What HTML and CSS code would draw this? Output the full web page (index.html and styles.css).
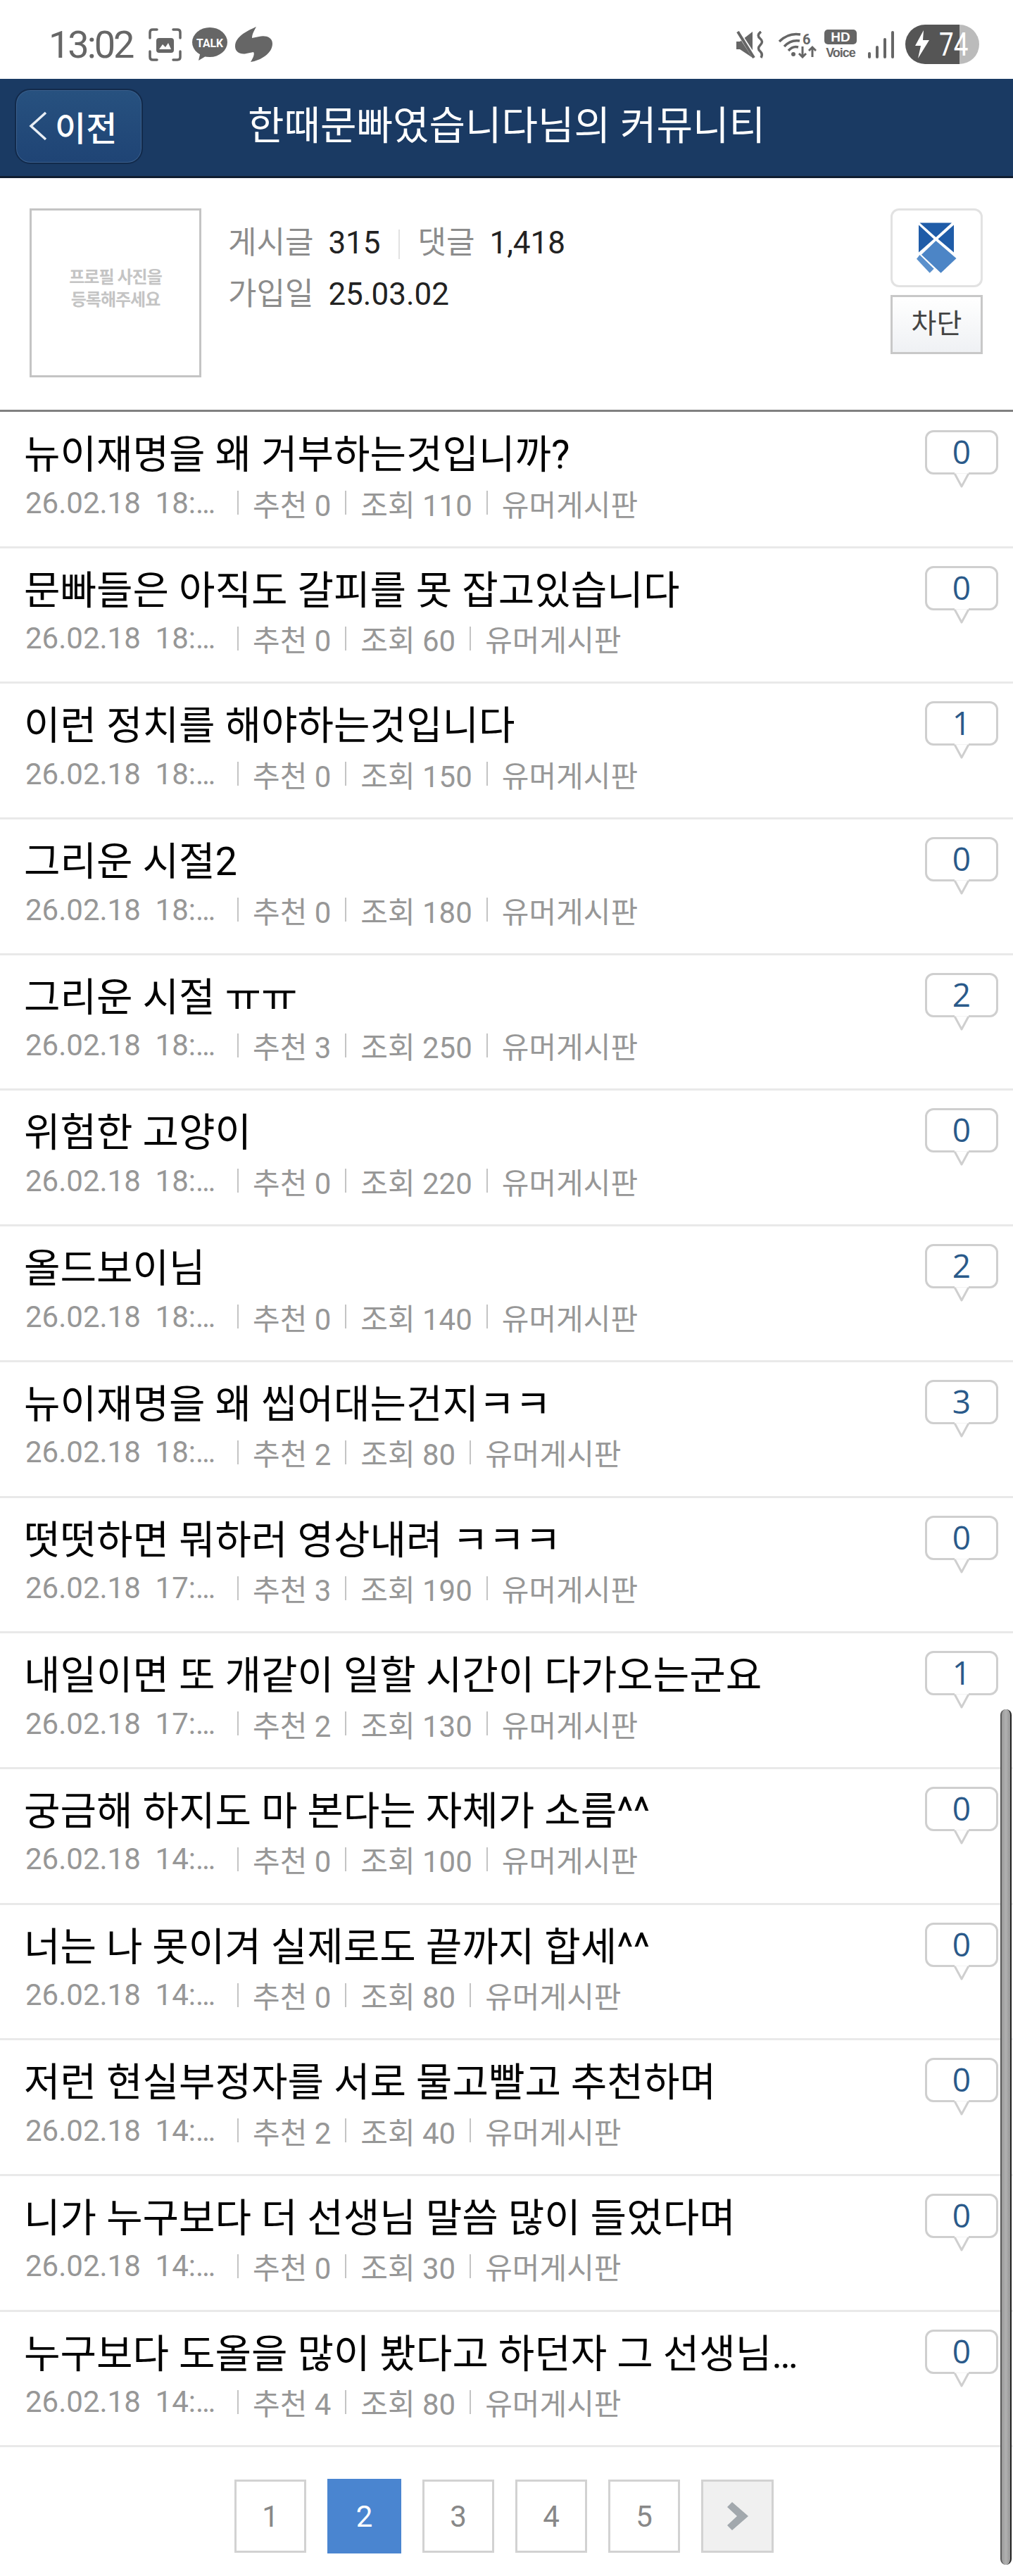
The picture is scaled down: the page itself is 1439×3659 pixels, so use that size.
FILE: index.html
```html
<!DOCTYPE html>
<html lang="ko">
<head>
  <meta charset="UTF-8">
  <meta name="viewport" content="width=device-width, initial-scale=1.0">
  <title>한때문빠였습니다님의 커뮤니티</title>
  <link rel="stylesheet" href="styles.css">
</head>
<body>
  <svg class="defs" width="0" height="0">
    <symbol id="tail" viewBox="0 0 30 24">
      <path d="M0 1.5H5L15 20L25 1.5H30" fill="#fff" stroke="#cfcfcf" stroke-width="3" stroke-linejoin="round"/>
      <rect x="5" y="0" width="20" height="1.5" fill="#fff"/>
    </symbol>
  </svg>

  <div class="status-bar">
    <div class="status-left">
      <span class="clock">13:02</span>
      <svg class="ico-shot" width="47" height="47" viewBox="0 0 47 47" fill="none" stroke="#666" stroke-width="3.5" stroke-linecap="round">
        <path d="M2 14V6Q2 2 6 2H12M35 2H41Q45 2 45 6V14M45 33V41Q45 45 41 45H35M12 45H6Q2 45 2 41V33"/>
        <rect x="11" y="14" width="25" height="21" rx="4" fill="#666" stroke="none"/>
        <path d="M15 30L20 23L24 27L28 21L32 30Z" fill="#fff" stroke="none"/>
      </svg>
      <svg class="ico-talk" width="50" height="48" viewBox="0 0 50 48">
        <ellipse cx="25" cy="21" rx="25" ry="21" fill="#666"/>
        <path d="M12 34L9 47L24 38Z" fill="#666"/>
        <text x="25" y="28" text-anchor="middle" class="talk-text" textLength="38" lengthAdjust="spacingAndGlyphs">TALK</text>
      </svg>
      <svg class="ico-flame" width="53" height="50" viewBox="0 0 53 50">
        <path d="M30 0C22 4 0 12 0 28C0 36 8 40 16 38L26 36C28 38 26 44 22 50C36 48 53 38 53 24C53 14 42 12 34 14L24 16C24 10 28 4 30 0Z" fill="#666"/>
      </svg>
    </div>
    <div class="status-right">
      <svg class="ico-mute" width="40" height="39" viewBox="0 0 40 39" fill="#666">
        <path d="M0 15H5L23 1V38L5 26H0Z"/>
        <path d="M1 -1L27 39" stroke="#fff" stroke-width="6"/>
        <path d="M2 1L25 38" stroke="#666" stroke-width="4"/>
        <path d="M35 1Q28 6 34 11Q39 15 34 20Q29 25 34 29Q38 33 35 38" fill="none" stroke="#666" stroke-width="3.5"/>
      </svg>
      <svg class="ico-wifi" width="54" height="39" viewBox="0 0 54 39" fill="none" stroke="#666" stroke-width="3.5">
        <path d="M1 15Q14 2 31 5M8 22Q17 12 30 14M14 28Q20 21 28 23"/>
        <circle cx="21" cy="33" r="3" fill="#666" stroke="none"/>
        <text x="34" y="19" class="wifi-six">6</text>
        <path d="M34 22V37M29 32L34 37L39 32M48 37V24M43 28L48 23L53 28" stroke-width="3"/>
      </svg>
      <div class="hd-voice">
        <span class="hd">HD</span>
        <span class="voice">Voice</span>
      </div>
      <div class="signal">
        <i class="bar-1"></i><i class="bar-2"></i><i class="bar-3"></i><i class="bar-4"></i>
      </div>
      <div class="battery">
        <svg width="20" height="40" viewBox="0 0 20 40"><path d="M12 0L0 22H8L4 40L20 14H11Z" fill="#fff"/></svg>
        <span class="battery-num">74</span>
      </div>
    </div>
  </div>

  <header class="topbar">
    <a class="back-btn">
      <svg width="26" height="42" viewBox="0 0 26 42" fill="none"><path d="M24 2L3 21L24 40" stroke="#e8eef5" stroke-width="3.5"/></svg>
      <span>이전</span>
    </a>
    <h1>한때문빠였습니다님의 커뮤니티</h1>
    <span></span>
  </header>

  <section class="profile">
    <div class="photo">프로필 사진을<br>등록해주세요</div>
    <div class="info">
      <p><span class="label">게시글</span> <b>315</b><i class="v-line"></i><span class="label">댓글</span> <b>1,418</b></p>
      <p><span class="label">가입일</span> <b>25.03.02</b></p>
    </div>
    <div class="actions">
      <div class="logo-box">
        <svg width="57" height="72" viewBox="0 0 57 72">
          <path d="M4.5 .5H50L27.5 21Z" fill="#1f5ca8"/>
          <path d="M3 3.5L24.5 23.5L3 42.5Z" fill="#1f5ca8"/>
          <path d="M53 3.5L30.5 23.5L53 42.5Z" fill="#1f5ca8"/>
          <path d="M27.5 26L56.5 51L34.5 71.7L7 45.7Z" fill="#4c85c6"/>
          <path d="M4.5 46L24.7 65.7L18.7 71.7L0 51.7Z" fill="#5a90cc"/>
        </svg>
      </div>
      <div class="block-btn">차단</div>
    </div>
  </section>

  <ul class="post-list">
    <li class="post">
      <div class="post-main">
        <div class="post-title">뉴이재명을 왜 거부하는것입니까?</div>
        <div class="post-meta"><span class="date">26.02.18&nbsp;&nbsp;18:…</span><i></i><span>추천 0</span><i></i><span>조회 110</span><i></i><span>유머게시판</span></div>
      </div>
      <div class="bubble"><div class="count">0</div><svg class="tail"><use href="#tail"/></svg></div>
    </li>
    <li class="post">
      <div class="post-main">
        <div class="post-title">문빠들은 아직도 갈피를 못 잡고있습니다</div>
        <div class="post-meta"><span class="date">26.02.18&nbsp;&nbsp;18:…</span><i></i><span>추천 0</span><i></i><span>조회 60</span><i></i><span>유머게시판</span></div>
      </div>
      <div class="bubble"><div class="count">0</div><svg class="tail"><use href="#tail"/></svg></div>
    </li>
    <li class="post">
      <div class="post-main">
        <div class="post-title">이런 정치를 해야하는것입니다</div>
        <div class="post-meta"><span class="date">26.02.18&nbsp;&nbsp;18:…</span><i></i><span>추천 0</span><i></i><span>조회 150</span><i></i><span>유머게시판</span></div>
      </div>
      <div class="bubble"><div class="count">1</div><svg class="tail"><use href="#tail"/></svg></div>
    </li>
    <li class="post">
      <div class="post-main">
        <div class="post-title">그리운 시절2</div>
        <div class="post-meta"><span class="date">26.02.18&nbsp;&nbsp;18:…</span><i></i><span>추천 0</span><i></i><span>조회 180</span><i></i><span>유머게시판</span></div>
      </div>
      <div class="bubble"><div class="count">0</div><svg class="tail"><use href="#tail"/></svg></div>
    </li>
    <li class="post">
      <div class="post-main">
        <div class="post-title">그리운 시절 ㅠㅠ</div>
        <div class="post-meta"><span class="date">26.02.18&nbsp;&nbsp;18:…</span><i></i><span>추천 3</span><i></i><span>조회 250</span><i></i><span>유머게시판</span></div>
      </div>
      <div class="bubble"><div class="count">2</div><svg class="tail"><use href="#tail"/></svg></div>
    </li>
    <li class="post">
      <div class="post-main">
        <div class="post-title">위험한 고양이</div>
        <div class="post-meta"><span class="date">26.02.18&nbsp;&nbsp;18:…</span><i></i><span>추천 0</span><i></i><span>조회 220</span><i></i><span>유머게시판</span></div>
      </div>
      <div class="bubble"><div class="count">0</div><svg class="tail"><use href="#tail"/></svg></div>
    </li>
    <li class="post">
      <div class="post-main">
        <div class="post-title">올드보이님</div>
        <div class="post-meta"><span class="date">26.02.18&nbsp;&nbsp;18:…</span><i></i><span>추천 0</span><i></i><span>조회 140</span><i></i><span>유머게시판</span></div>
      </div>
      <div class="bubble"><div class="count">2</div><svg class="tail"><use href="#tail"/></svg></div>
    </li>
    <li class="post">
      <div class="post-main">
        <div class="post-title">뉴이재명을 왜 씹어대는건지ㅋㅋ</div>
        <div class="post-meta"><span class="date">26.02.18&nbsp;&nbsp;18:…</span><i></i><span>추천 2</span><i></i><span>조회 80</span><i></i><span>유머게시판</span></div>
      </div>
      <div class="bubble"><div class="count">3</div><svg class="tail"><use href="#tail"/></svg></div>
    </li>
    <li class="post">
      <div class="post-main">
        <div class="post-title">떳떳하면 뭐하러 영상내려 ㅋㅋㅋ</div>
        <div class="post-meta"><span class="date">26.02.18&nbsp;&nbsp;17:…</span><i></i><span>추천 3</span><i></i><span>조회 190</span><i></i><span>유머게시판</span></div>
      </div>
      <div class="bubble"><div class="count">0</div><svg class="tail"><use href="#tail"/></svg></div>
    </li>
    <li class="post">
      <div class="post-main">
        <div class="post-title">내일이면 또 개같이 일할 시간이 다가오는군요</div>
        <div class="post-meta"><span class="date">26.02.18&nbsp;&nbsp;17:…</span><i></i><span>추천 2</span><i></i><span>조회 130</span><i></i><span>유머게시판</span></div>
      </div>
      <div class="bubble"><div class="count">1</div><svg class="tail"><use href="#tail"/></svg></div>
    </li>
    <li class="post">
      <div class="post-main">
        <div class="post-title">궁금해 하지도 마 본다는 자체가 소름^^</div>
        <div class="post-meta"><span class="date">26.02.18&nbsp;&nbsp;14:…</span><i></i><span>추천 0</span><i></i><span>조회 100</span><i></i><span>유머게시판</span></div>
      </div>
      <div class="bubble"><div class="count">0</div><svg class="tail"><use href="#tail"/></svg></div>
    </li>
    <li class="post">
      <div class="post-main">
        <div class="post-title">너는 나 못이겨 실제로도 끝까지 합세^^</div>
        <div class="post-meta"><span class="date">26.02.18&nbsp;&nbsp;14:…</span><i></i><span>추천 0</span><i></i><span>조회 80</span><i></i><span>유머게시판</span></div>
      </div>
      <div class="bubble"><div class="count">0</div><svg class="tail"><use href="#tail"/></svg></div>
    </li>
    <li class="post">
      <div class="post-main">
        <div class="post-title">저런 현실부정자를 서로 물고빨고 추천하며</div>
        <div class="post-meta"><span class="date">26.02.18&nbsp;&nbsp;14:…</span><i></i><span>추천 2</span><i></i><span>조회 40</span><i></i><span>유머게시판</span></div>
      </div>
      <div class="bubble"><div class="count">0</div><svg class="tail"><use href="#tail"/></svg></div>
    </li>
    <li class="post">
      <div class="post-main">
        <div class="post-title">니가 누구보다 더 선생님 말씀 많이 들었다며</div>
        <div class="post-meta"><span class="date">26.02.18&nbsp;&nbsp;14:…</span><i></i><span>추천 0</span><i></i><span>조회 30</span><i></i><span>유머게시판</span></div>
      </div>
      <div class="bubble"><div class="count">0</div><svg class="tail"><use href="#tail"/></svg></div>
    </li>
    <li class="post">
      <div class="post-main">
        <div class="post-title">누구보다 도올을 많이 봤다고 하던자 그 선생님…</div>
        <div class="post-meta"><span class="date">26.02.18&nbsp;&nbsp;14:…</span><i></i><span>추천 4</span><i></i><span>조회 80</span><i></i><span>유머게시판</span></div>
      </div>
      <div class="bubble"><div class="count">0</div><svg class="tail"><use href="#tail"/></svg></div>
    </li>
  </ul>

  <nav class="pager">
    <a>1</a>
    <a class="on">2</a>
    <a>3</a>
    <a>4</a>
    <a>5</a>
    <a class="next">
      <svg width="30" height="40" viewBox="0 0 30 40"><path d="M7 0L30 20L7 40L0 33L14 20L0 7Z" fill="#a2a8ad"/></svg>
    </a>
  </nav>

  <div class="scroll-thumb"></div>
</body>
</html>
```

FILE: styles.css
```css
* {
  box-sizing: border-box;
}

html, body {
  margin: 0;
  padding: 0;
}

body {
  position: relative;
  width: 1439px;
  height: 3659px;
  overflow: hidden;
  background: #fff;
  font-family: Roboto, "Noto Sans CJK KR", sans-serif;
  color: #000;
}

.defs {
  position: absolute;
}

/* status bar */
.status-bar {
  display: flex;
  justify-content: space-between;
  align-items: center;
  height: 112px;
  padding: 14px 48px 0 69px;
}

.status-left,
.status-right {
  display: flex;
  align-items: center;
}

.clock {
  font-size: 54px;
  letter-spacing: -3px;
  color: #666;
  margin-right: 23px;
}

.ico-talk {
  margin-left: 15px;
}

.ico-flame {
  margin-left: 11px;
}

.talk-text {
  font-size: 17px;
  font-weight: 700;
  fill: #fff;
}

.wifi-six {
  font-size: 20px;
  font-weight: 700;
  fill: #666;
  stroke: none;
}

.ico-wifi {
  margin-left: 20px;
}

.hd-voice {
  display: flex;
  flex-direction: column;
  align-items: center;
  width: 46px;
  margin-left: 11px;
}

.hd {
  width: 46px;
  height: 21px;
  border-radius: 5px;
  background: #666;
  color: #fff;
  font: 700 19px/21px "Liberation Sans", sans-serif;
  text-align: center;
}

.voice {
  margin-top: 3px;
  font: 700 18px/18px "Liberation Sans", sans-serif;
  letter-spacing: -1px;
  color: #666;
  white-space: nowrap;
}

.signal {
  display: flex;
  align-items: flex-end;
  gap: 7px;
  height: 39px;
  margin-left: 16px;
}

.signal i {
  display: block;
  width: 4px;
  border-radius: 2px;
  background: #666;
}

.bar-1 { height: 9px; }
.bar-2 { height: 18px; }
.bar-3 { height: 29px; }
.bar-4 { height: 39px; }

.battery {
  display: flex;
  align-items: center;
  width: 105px;
  height: 56px;
  margin-left: 16px;
  padding-left: 14px;
  border-radius: 28px;
  background: linear-gradient(90deg, #555 0, #555 77px, #bbb 77px);
}

.battery-num {
  display: block;
  margin-left: 14px;
  font-size: 46px;
  line-height: 56px;
  color: #fff;
  transform: scaleX(.8);
  transform-origin: left center;
}

/* navy top bar */
.topbar {
  display: grid;
  grid-template-columns: 1fr auto 1fr;
  align-items: center;
  height: 141px;
  padding: 0 21px 4px;
  background: #1a3a63;
  border-bottom: 3px solid #101d30;
  color: #fff;
}

.topbar h1 {
  margin: 0;
  font-size: 56px;
  font-weight: 400;
  line-height: 64px;
}

.back-btn {
  display: flex;
  align-items: center;
  gap: 11px;
  width: 182px;
  height: 107px;
  padding-left: 18px;
  border: 2px solid #122a4b;
  border-radius: 22px;
  background: linear-gradient(#27517f, #1f4475);
  box-shadow: inset 0 0 0 1px #3a5f8c;
  font-size: 48px;
  font-weight: 500;
}

/* profile box */
.profile {
  display: flex;
  height: 332px;
  padding: 43px 43px 0 42px;
  border-bottom: 3px solid #808080;
}

.photo {
  display: flex;
  align-items: center;
  justify-content: center;
  width: 244px;
  height: 240px;
  padding-bottom: 12px;
  border: 3px solid #c4c4c4;
  color: #c4c4c4;
  font-size: 24px;
  font-weight: 700;
  line-height: 32px;
  letter-spacing: -1px;
  text-align: center;
}

.info {
  flex: 1;
  margin-left: 38px;
  padding-top: 13px;
  font-size: 44px;
  line-height: 73px;
}

.info p {
  margin: 0;
  white-space: nowrap;
}

.info b {
  font-weight: 400;
  color: #222;
  margin-left: 10px;
}

.label {
  color: #8c8c8c;
}

.v-line {
  display: inline-block;
  width: 2px;
  height: 42px;
  margin: 0 26px 0 25px;
  background: #e2e2e2;
  vertical-align: -8px;
}

.actions {
  display: flex;
  flex-direction: column;
  gap: 11px;
  width: 131px;
}

.logo-box {
  display: flex;
  align-items: center;
  justify-content: center;
  height: 112px;
  border: 3px solid #e2e2e2;
  border-radius: 12px;
}

.block-btn {
  height: 84px;
  border: 3px solid #c8c8c8;
  background: linear-gradient(#fff, #eff1f4);
  color: #444;
  font-size: 39px;
  line-height: 76px;
  text-align: center;
}

/* post list */
.post-list {
  margin: 0;
  padding: 1px 0 0;
  list-style: none;
}

.post {
  display: flex;
  justify-content: space-between;
  height: 192.7px;
  padding: 25px 21px 0 36px;
  border-bottom: 3px solid #e9e9e9;
}

.post-title {
  margin: 3px 0 0 -2px;
  font-size: 56px;
  line-height: 64px;
  white-space: nowrap;
}

.post-meta {
  display: flex;
  align-items: center;
  gap: 20px;
  height: 36px;
  margin-top: 18px;
  font-size: 42px;
  color: #979797;
  white-space: nowrap;
}

.post-meta i {
  display: block;
  width: 2px;
  height: 34px;
  background: #c4c4c4;
}

.post-meta .date {
  width: 281px;
}

.bubble {
  width: 104px;
}

.count {
  height: 63px;
  border: 3px solid #cfcfcf;
  border-radius: 12px;
  color: #2a5a8a;
  font-family: "Open Sans", sans-serif;
  font-size: 46px;
  line-height: 54px;
  text-align: center;
}

.tail {
  display: block;
  width: 30px;
  height: 24px;
  margin: -3px auto 0;
}

/* pagination */
.pager {
  display: flex;
  justify-content: center;
  align-items: center;
  gap: 30px;
  margin-top: 45px;
  padding-right: 7px;
  font-size: 42px;
  color: #888;
}

.pager a {
  display: flex;
  align-items: center;
  justify-content: center;
  width: 102px;
  height: 104px;
  border: 3px solid #d2d2d2;
}

.pager .on {
  height: 106px;
  width: 105px;
  border: none;
  background: #4a85d0;
  color: #fff;
}

.pager .next {
  background: #f0f0f0;
  width: 103px;
}

/* overlay scrollbar */
.scroll-thumb {
  position: absolute;
  top: 2428px;
  left: 1421px;
  width: 16px;
  height: 1215px;
  border-radius: 8px;
  border-left: 2px solid #5a5a5a;
  border-right: 2px solid #222;
  background: linear-gradient(90deg, #9b9b9b, #b0b0b0 50%, #969696);
}
```
